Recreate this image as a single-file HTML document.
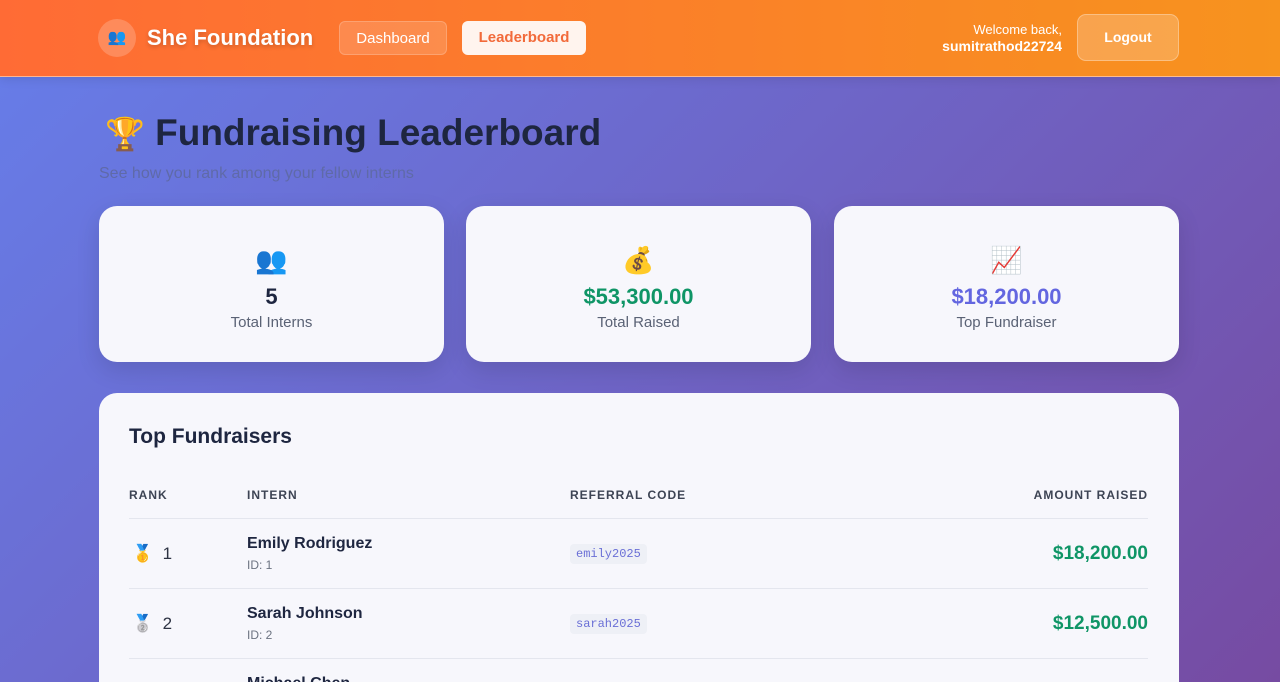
<!DOCTYPE html>
<html style="height:682px;overflow:hidden"><head><meta charset="utf-8"><style>
*{box-sizing:border-box;margin:0;padding:0}
body{width:1280px;height:682px;overflow:hidden;font-family:"Liberation Sans","DejaVu Sans",sans-serif;background:linear-gradient(135deg,#667eea 0%,#764ba2 100%);position:relative}
.hdr{position:absolute;left:0;top:0;width:1280px;height:77px;background:linear-gradient(90deg,#ff6b35,#f7931e);border-bottom:1px solid rgba(255,200,170,.8);box-shadow:0 2px 10px rgba(0,0,0,.1)}
.logo{position:absolute;left:98px;top:19px;width:38px;height:38px;border-radius:50%;background:rgba(255,255,255,.2);font-size:15px;text-align:center;line-height:38px;color:#4b2a8a}
.brand{position:absolute;left:147px;top:25px;font-size:22px;font-weight:bold;color:#fff;text-shadow:0 2px 4px rgba(0,0,0,.2)}
.nav{position:absolute;top:21px;height:34px;border-radius:6px;font-size:15px;line-height:34px;text-align:center}
.n1{left:339px;width:108px;background:rgba(255,255,255,.15);border:1px solid rgba(255,255,255,.2);color:#fff}
.n2{left:462px;width:124px;background:#fff4ee;color:#f26a3a;font-weight:bold}
.wel{position:absolute;right:218px;top:21px;text-align:right;color:#fff;font-size:13px;line-height:17px}
.wel b{font-size:14px}
.lo{position:absolute;left:1077px;top:14px;width:102px;height:47px;border-radius:9px;background:rgba(255,255,255,.2);border:1px solid rgba(255,255,255,.3);color:#fff;font-weight:bold;font-size:14px;text-align:center;line-height:45px}
h1{position:absolute;left:105px;top:112px;font-size:37px;color:#1e2640;font-weight:bold;white-space:nowrap}
h1 span{font-size:32px}
.sub{position:absolute;left:99px;top:165px;font-size:16px;color:#5f6aa8}
.card{position:absolute;top:206px;width:345px;height:156px;background:#f7f7fc;border-radius:18px;box-shadow:0 8px 24px rgba(0,0,0,.12);text-align:center}
.card .ic{margin-top:38px;font-size:26px;height:32px;line-height:32px}
.card .v{font-size:22px;font-weight:bold;margin-top:8px;color:#1e2640}
.card .l{font-size:15px;color:#5a6275;margin-top:4px}
.tb{position:absolute;left:99px;top:393px;width:1080px;height:289px;background:#f7f7fc;border-radius:18px 18px 0 0;overflow:hidden}
.tb h2{position:absolute;left:30px;top:32px;font-size:21px;color:#1e2640;font-weight:bold}
.th{position:absolute;top:95px;font-size:12px;font-weight:bold;letter-spacing:1px;color:#3d4454}
.line{position:absolute;left:30px;width:1019px;height:1px;background:#e4e6ee}
.rk{position:absolute;left:33px;font-size:17px;color:#2d3343}
.nm{position:absolute;left:148px;font-size:16px;font-weight:bold;color:#1e2640}
.id{position:absolute;left:148px;font-size:12px;color:#6b7280}
.code{position:absolute;left:471px;font-family:"Liberation Mono",monospace;font-size:12px;color:#6a6fd6;background:#eef0f6;padding:3px 6px;border-radius:4px}
.amt{position:absolute;right:31px;font-size:19px;font-weight:bold;color:#0f9566}
</style></head><body>
<div class="hdr">
<div class="logo">👥</div>
<div class="brand">She Foundation</div>
<div class="nav n1">Dashboard</div>
<div class="nav n2">Leaderboard</div>
<div class="wel">Welcome back,<br><b>sumitrathod22724</b></div>
<div class="lo">Logout</div>
</div>
<h1><span>🏆</span> Fundraising Leaderboard</h1>
<div class="sub">See how you rank among your fellow interns</div>
<div class="card" style="left:99px"><div class="ic">👥</div><div class="v">5</div><div class="l">Total Interns</div></div>
<div class="card" style="left:466px"><div class="ic">💰</div><div class="v" style="color:#0f9566">$53,300.00</div><div class="l">Total Raised</div></div>
<div class="card" style="left:834px"><div class="ic">📈</div><div class="v" style="color:#6366e0">$18,200.00</div><div class="l">Top Fundraiser</div></div>
<div class="tb">
<h2>Top Fundraisers</h2>
<div class="th" style="left:30px">RANK</div>
<div class="th" style="left:148px">INTERN</div>
<div class="th" style="left:471px">REFERRAL CODE</div>
<div class="th" style="right:31px">AMOUNT RAISED</div>
<div class="line" style="top:125px"></div>
<div class="rk" style="top:151px">🥇 &nbsp;1</div>
<div class="nm" style="top:142px">Emily Rodriguez</div>
<div class="id" style="top:165px">ID: 1</div>
<div class="code" style="top:151px">emily2025</div>
<div class="amt" style="top:150px">$18,200.00</div>
<div class="line" style="top:195px"></div>
<div class="rk" style="top:221px">🥈 &nbsp;2</div>
<div class="nm" style="top:212px">Sarah Johnson</div>
<div class="id" style="top:235px">ID: 2</div>
<div class="code" style="top:221px">sarah2025</div>
<div class="amt" style="top:220px">$12,500.00</div>
<div class="line" style="top:265px"></div>
<div class="nm" style="top:282px">Michael Chen</div>
</div>
</body></html>
